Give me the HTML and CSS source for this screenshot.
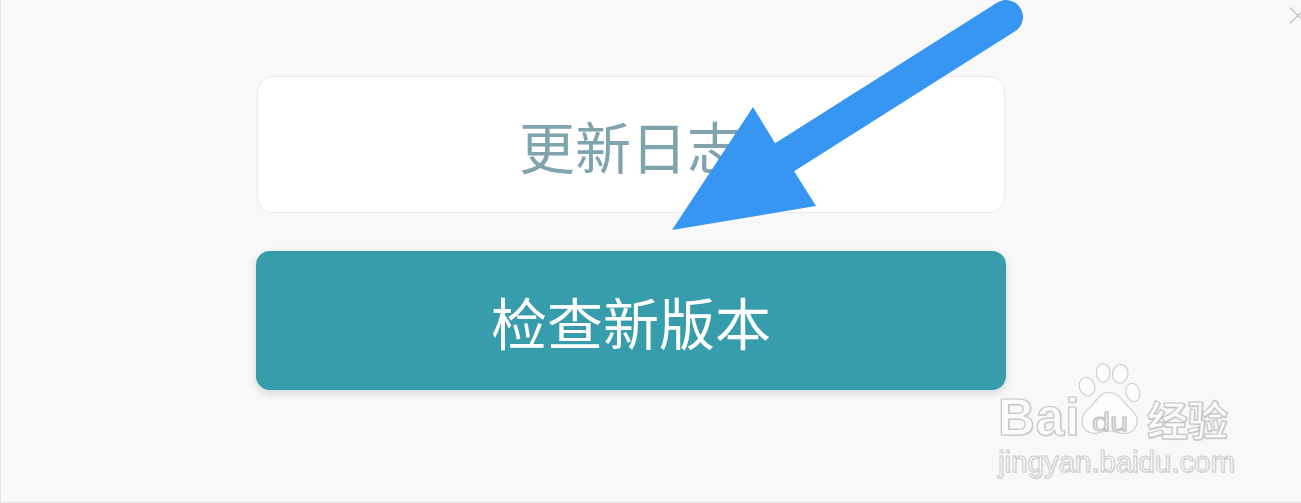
FILE: index.html
```html
<!DOCTYPE html>
<html lang="zh-CN">
<head>
<meta charset="utf-8">
<title>更新日志</title>
<link rel="stylesheet" href="styles.css">
</head>
<body>
<main class="window">
  <svg class="close" viewBox="0 0 12 18" aria-hidden="true"><path d="M1 0.5L9 8.5L1 16.5M9 8.5L17 0.5M9 8.5L17 16.5"/></svg>
  <div class="stack">
    <button class="btn btn-log">更新日志</button>
    <button class="btn btn-check">检查新版本</button>
  </div>
  <svg class="arrow" viewBox="0 0 1301 503" aria-hidden="true">
    <path class="arrow-shaft" d="M1006 17L785 157"/>
    <path class="arrow-head" d="M672 230L753 107L775 143L794 171L816 206Z"/>
  </svg>
  <div class="mark">
    <div class="mark-top">
      <span class="mark-word">Bai</span>
      <svg class="paw" viewBox="0 0 80 90" aria-hidden="true">
        <ellipse cx="13" cy="28" rx="9" ry="11" transform="rotate(-20 13 28)"/>
        <ellipse cx="32" cy="12" rx="8" ry="11"/>
        <ellipse cx="52" cy="13" rx="9" ry="11" transform="rotate(12 52 13)"/>
        <ellipse cx="67" cy="35" rx="8" ry="11" transform="rotate(-15 67 35)"/>
        <path d="M38 35c-9 0-13 8-18 14-6 6-13 10-13 20 0 9 8 15 17 14 6-1 10-3 15-3s10 3 16 3c10 1 17-6 17-15 0-9-8-13-14-20-4-6-10-13-20-13Z"/>
      </svg>
      <span class="mark-du">du</span>
      <span class="mark-word mark-cn">经验</span>
    </div>
    <div class="mark-url">jingyan.baidu.com</div>
  </div>
</main>
</body>
</html>
```
FILE: styles.css
```css
* { box-sizing: border-box; }
html, body { margin: 0; height: 100%; }
body { font-family: "Noto Sans CJK SC", "Noto Sans", sans-serif; background: #f8f8f9; overflow: hidden; }
.window {
  position: relative;
  width: 1301px;
  height: 503px;
  padding-top: 76px;
  border-left: 1px solid #e4e4e4;
  border-bottom: 1px solid #e2e2e2;
  overflow: hidden;
}
.stack { display: flex; flex-direction: column; align-items: center; gap: 38px; margin-left: -20px; width: 1300px; }
.btn {
  display: flex;
  align-items: center;
  justify-content: center;
  font-family: inherit;
  font-size: 56px;
  font-weight: 400;
  line-height: 1;
  padding: 0;
}
.btn-log {
  width: 748px;
  height: 137px;
  background: #fff;
  color: #7fa4ad;
  border: 1px solid #ebebeb;
  border-radius: 16px;
}
.btn-check {
  width: 750px;
  height: 139px;
  background: #379dac;
  color: #fff;
  border: 0;
  border-radius: 14px;
  box-shadow: 0 3px 8px rgba(0, 0, 0, .14);
}
.arrow { position: absolute; left: -1px; top: 0; width: 1301px; height: 503px; }
.arrow-shaft { stroke: #3896f3; stroke-width: 34px; stroke-linecap: round; fill: none; }
.arrow-head { fill: #3896f3; }
.close { position: absolute; right: 0; top: 7px; width: 12px; height: 18px; }
.close path { fill: none; stroke: #c6c6c6; stroke-width: 1.4px; }
.mark { position: absolute; left: 997px; top: 362px; width: 240px; color: #fbfbfb; }
.mark-top { position: relative; display: flex; align-items: flex-end; height: 79px; }
.mark-word {
  font-family: "Liberation Sans", sans-serif;
  font-weight: 700;
  font-size: 51px;
  line-height: 46px;
  letter-spacing: 1px;
  -webkit-text-stroke: 1.2px #c4c4c4;
  text-shadow: 1px 1px 1px #d8d8d8;
}
.mark-cn { position: absolute; left: 149px; bottom: 0; font-family: "Noto Sans CJK SC", sans-serif; font-size: 41px; letter-spacing: -1px; line-height: 46px; }
.paw { position: absolute; left: 78px; top: 0; width: 68px; height: 78px; }
.paw ellipse, .paw path { fill: #fcfcfc; stroke: #cfcfcf; stroke-width: 1.4px; }
.mark-du {
  position: absolute;
  left: 94px;
  bottom: 3px;
  font-family: "Liberation Sans", sans-serif;
  font-size: 25px;
  line-height: 32px;
  color: #eeeeee;
  -webkit-text-stroke: 1px #bdbdbd;
  transform: scaleX(1.3);
  transform-origin: left center;
}
.mark-url {
  margin-top: 4px;
  font-family: "Liberation Sans", sans-serif;
  font-size: 29.4px;
  line-height: 34px;
  white-space: nowrap;
  -webkit-text-stroke: 1px #cdcdcd;
  text-shadow: 1px 1px 1px #dcdcdc;
}
```
